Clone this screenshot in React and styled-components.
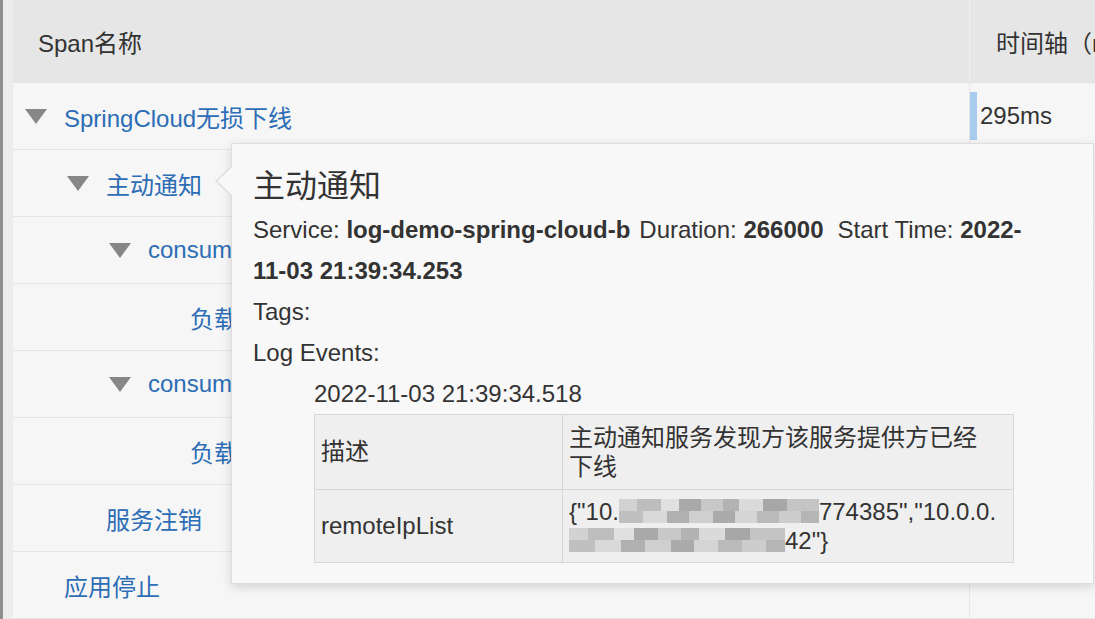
import styled, { createGlobalStyle } from "styled-components"

const GlobalStyle = createGlobalStyle`
html, body {
    margin: 0;
    padding: 0;
}

body {
    background: #ececec;
    font-family: "Liberation Sans", "Noto Sans CJK SC", sans-serif;
    color: #333;
    overflow: hidden;
}
`

const Page = styled.div`
width: 1095px;
height: 619px;
box-sizing: border-box;
border-left: 3px solid #8f8f8f;
padding-left: 10px;
position: relative;
overflow: hidden;
`

const Header = styled.div`
display: grid;
grid-template-columns: 956px 1fr;
height: 83px;
box-sizing: border-box;
background: #e6e6e6;
border-bottom: 1px solid #e2e2e2;
`

const HeaderCell = styled.div`
display: flex;
align-items: center;
padding-left: ${p => p.$pad}px;
font-size: 24px;
color: #333;
white-space: nowrap;
overflow: hidden;
border-left: ${p => (p.$divider ? "1px solid #f1f1f1" : "none")};
`

const Row = styled.div`
display: grid;
grid-template-columns: 956px 1fr;
height: 67px;
box-sizing: border-box;
background: #f6f6f6;
border-bottom: 1px solid #e6e6e6;
`

const NameCell = styled.div`
display: flex;
align-items: center;
padding-left: ${p => 12 + p.$level * 42}px;
white-space: nowrap;
overflow: hidden;
`

const Toggle = styled.span`
width: 39px;
flex: none;
display: flex;
align-items: center;

&::before {
    content: "";
    display: ${p => (p.$open ? "block" : "none")};
    border-left: 11px solid transparent;
    border-right: 11px solid transparent;
    border-top: 15px solid #878787;
}
`

const SpanName = styled.span`
font-size: 24px;
color: #2c6db5;
`

const TimeCell = styled.div`
display: flex;
align-items: center;
border-left: 1px solid #e8e8e8;
font-size: 24px;
color: #333;
`

const Bar = styled.span`
width: 7px;
height: 48px;
background: #a9cbee;
margin-right: 3px;
`

const Tooltip = styled.div`
position: absolute;
left: 228px;
top: 143px;
width: 863px;
box-sizing: border-box;
padding: 21px 30px 20px 21px;
background: #f8f8f8;
border: 1px solid #dedede;
box-shadow: 0 3px 10px rgba(0, 0, 0, 0.14);

&::before,
&::after {
    content: "";
    position: absolute;
    top: 22px;
    border-top: 15px solid transparent;
    border-bottom: 15px solid transparent;
}

&::before {
    left: -17px;
    border-right: 16px solid #dcdcdc;
}

&::after {
    left: -15px;
    border-right: 16px solid #f8f8f8;
}
`

const Title = styled.div`
font-size: 32px;
line-height: 43.5px;
color: #333;
`

const Line = styled.div`
font-size: 24px;
line-height: 41px;
color: #333;
padding-left: ${p => p.$indent || 0}px;

b {
    font-weight: bold;
}
`

const Gap = styled.span`
display: inline-block;
width: ${p => p.$w}px;
`

const NoWrap = styled.span`
white-space: nowrap;
`

const EventTable = styled.table`
margin-left: 61px;
width: 700px;
table-layout: fixed;
border-collapse: collapse;
background: #efefef;
font-size: 24px;
color: #333;

td {
    border: 1px solid #d7d7d7;
    padding: 8px 18px 8px 6px;
    line-height: 29px;
    vertical-align: middle;
}

tr + tr td {
    padding-top: 7px;
    padding-bottom: 7px;
}

td:first-child {
    width: 248px;
    box-sizing: border-box;
}
`

const CellLine = styled.div`
white-space: nowrap;
`

const Mosaic = styled.span`
display: inline-block;
width: ${p => p.$w}px;
height: 24px;
vertical-align: -3px;
background-image:
    linear-gradient(90deg, #d2d2d2 0 9%, #bdbdbd 9% 21%, #e0e0e0 21% 30%, #a9a9a9 30% 41%, #c8c8c8 41% 52%, #b3b3b3 52% 60%, #dadada 60% 72%, #a7a7a7 72% 84%, #c4c4c4 84% 100%),
    linear-gradient(90deg, #c0c0c0 0 12%, #d9d9d9 12% 24%, #b0b0b0 24% 35%, #cfcfcf 35% 47%, #aaaaaa 47% 58%, #d4d4d4 58% 69%, #bababa 69% 80%, #cdcdcd 80% 91%, #b5b5b5 91% 100%);
background-size: 100% 50%;
background-position: top, bottom;
background-repeat: no-repeat;
`

const rows = [
    { level: 0, open: true, name: "SpringCloud无损下线", time: "295ms" },
    { level: 1, open: true, name: "主动通知" },
    { level: 2, open: true, name: "consumer-provider-notify" },
    { level: 3, name: "负载均衡移除节点" },
    { level: 2, open: true, name: "consumer-provider-notify" },
    { level: 3, name: "负载均衡移除节点" },
    { level: 1, name: "服务注销" },
    { level: 0, name: "应用停止" },
]

const App = () => {
    return (
        <>
            <GlobalStyle />
            <Page>
                <Header>
                    <HeaderCell $pad={25}>Span名称</HeaderCell>
                    <HeaderCell $pad={26} $divider>时间轴（ms）</HeaderCell>
                </Header>
                {rows.map((r, i) => (
                    <Row key={i}>
                        <NameCell $level={r.level}>
                            <Toggle $open={r.open} />
                            <SpanName>{r.name}</SpanName>
                        </NameCell>
                        <TimeCell>
                            {r.time && (
                                <>
                                    <Bar />
                                    {r.time}
                                </>
                            )}
                        </TimeCell>
                    </Row>
                ))}

                <Tooltip>
                    <Title>主动通知</Title>
                    <Line>
                        Service: <b>log-demo-spring-cloud-b</b>
                        <Gap $w={9} />
                        Duration: <b>266000</b>
                        <Gap $w={14} />
                        Start Time: <b>2022-<wbr /><NoWrap>11-03 21:39:34.253</NoWrap></b>
                    </Line>
                    <Line>Tags:</Line>
                    <Line>Log Events:</Line>
                    <Line $indent={61}>2022-11-03 21:39:34.518</Line>
                    <EventTable>
                        <tbody>
                            <tr>
                                <td>描述</td>
                                <td>主动通知服务发现方该服务提供方已经下线</td>
                            </tr>
                            <tr>
                                <td>remoteIpList</td>
                                <td>
                                    <CellLine>{"{\"10."}<Mosaic $w={200} />{"774385\",\"10.0.0."}</CellLine>
                                    <CellLine><Mosaic $w={216} />{"42\"}"}</CellLine>
                                </td>
                            </tr>
                        </tbody>
                    </EventTable>
                </Tooltip>
            </Page>
        </>
    )
}

export default App
